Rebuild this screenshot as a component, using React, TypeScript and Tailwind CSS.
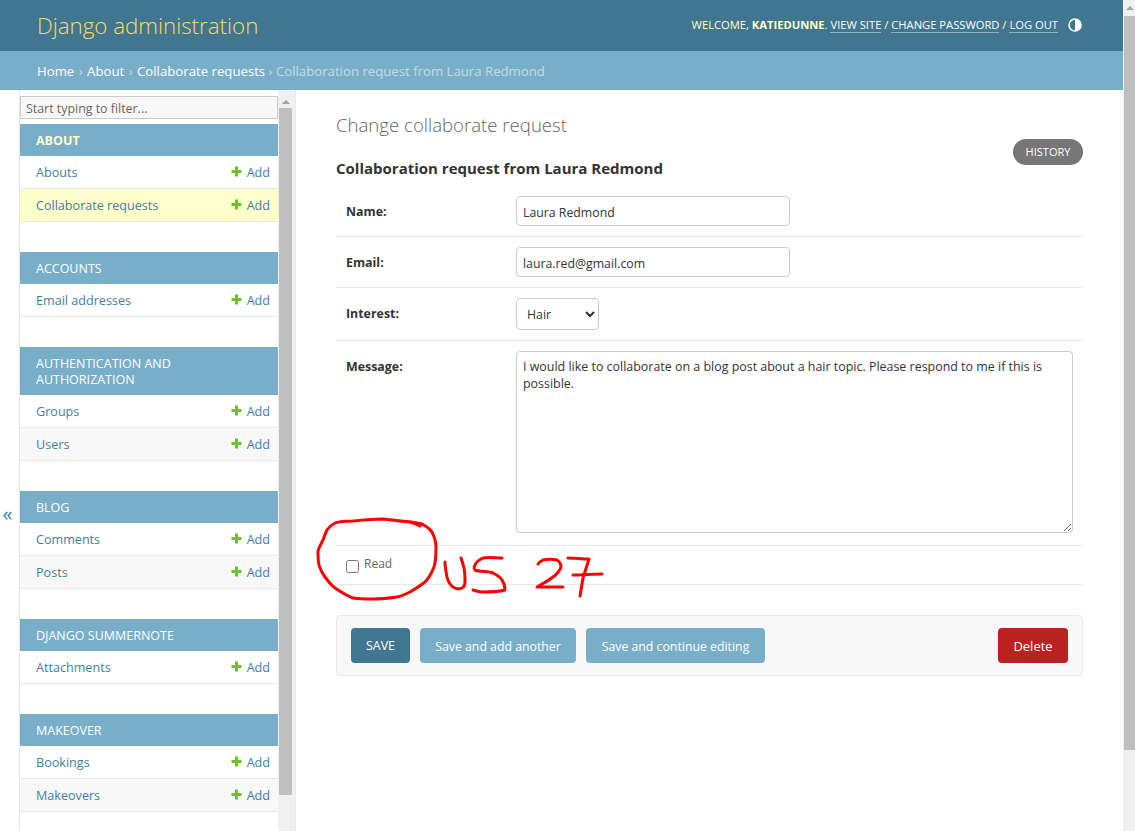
import React from "react";

const groups = [
  { title: "About", bold: true, models: ["Abouts", "Collaborate requests"] },
  { title: "Accounts", models: ["Email addresses"] },
  { title: "Authentication and Authorization", models: ["Groups", "Users"] },
  { title: "Blog", models: ["Comments", "Posts"] },
  { title: "Django Summernote", models: ["Attachments"] },
  { title: "Makeover", models: ["Bookings", "Makeovers"] },
];

function Plus() {
  return (
    <svg width="11" height="11" viewBox="0 0 11 11" className="mb-[3px] shrink-0">
      <path d="M4 0.5h3v3.5h3.5v3h-3.5v3.5h-3v-3.5h-3.5v-3h3.5z" fill="#70bf2b" />
    </svg>
  );
}

function Row({ label, children, className = "" }: { label: string; children: React.ReactNode; className?: string }) {
  return (
    <div className={`flex border-b border-[#e8e8e8] px-[10px] pt-[10px] ${className}`}>
      <label className="w-[170px] shrink-0 pt-[8px] text-[12.4px] leading-[16px] font-bold text-[#333]">{label}</label>
      {children}
    </div>
  );
}

export default function App() {
  return (
    <div className="relative flex h-[831px] w-full overflow-hidden bg-white font-['Open_Sans',sans-serif] text-[#333]">
      <div className="flex h-full w-[1123px] shrink-0 flex-col">
        <header className="flex h-[51px] shrink-0 items-center justify-between bg-[#417690] pl-[37px] pr-[41px]">
          <div className="pt-[1px] text-[22.3px] leading-[30px] font-light text-[#f5dd5d]">Django administration</div>
          <div className="flex items-center text-[11.2px] text-[#ffc]">
            <span>WELCOME, <b>KATIEDUNNE</b>.&nbsp;</span>
            <a className="border-b border-[#8fb1c2] leading-[14px] text-[#fff]">VIEW SITE</a>
            <span>&nbsp;/&nbsp;</span>
            <a className="border-b border-[#8fb1c2] leading-[14px] text-[#fff]">CHANGE PASSWORD</a>
            <span>&nbsp;/&nbsp;</span>
            <a className="border-b border-[#8fb1c2] leading-[14px] text-[#fff]">LOG OUT</a>
            <svg width="14" height="14" viewBox="0 0 14 14" className="ml-[10px]">
              <circle cx="7" cy="7" r="6" fill="none" stroke="#fff" strokeWidth="1.6" />
              <path d="M7 1a6 6 0 0 1 0 12z" fill="#fff" />
            </svg>
          </div>
        </header>
        <div className="flex h-[39px] shrink-0 items-center bg-[#79aec8] pl-[37px] pt-[2px] text-[13.2px] text-[#c4dce8]">
          <span className="text-white">Home</span>
          <span className="px-[1px]">&nbsp;›&nbsp;</span>
          <span className="text-white">About</span>
          <span className="px-[1px]">&nbsp;›&nbsp;</span>
          <span className="text-white">Collaborate requests</span>
          <span>&nbsp;›&nbsp;Collaboration request from Laura Redmond</span>
        </div>
        <div className="flex min-h-0 flex-1">
          <div className="flex w-[20px] shrink-0 items-center justify-center border-r border-[#e8e8e8] pt-[108px] text-[20px] leading-none text-[#447e9b]">
            <span className="pb-[2px] pr-[4px]">«</span>
          </div>
          <nav className="w-[258px] shrink-0 overflow-hidden pt-[6px]">
            <input
              placeholder="Start typing to filter..."
              className="mb-[5px] box-border block h-[23px] w-[258px] border border-[#ccc] bg-[#f8f8f8] px-[5px] pt-[2px] text-[12.4px] outline-none placeholder:text-[#666]"
            />
            {groups.map((g) => (
              <div key={g.title} className="mb-[30px]">
                <div className={`bg-[#79aec8] px-[16px] pb-[7px] pt-[9px] text-[12.5px] leading-[16px] uppercase ${g.bold ? "font-bold text-[#ffc]" : "text-white"}`}>
                  {g.title}
                </div>
                {g.models.map((m, i) => (
                  <div
                    key={m}
                    className={`flex h-[33px] items-center justify-between border-b border-[#e8e8e8] pl-[16px] pr-[8px] pt-[2px] text-[12.6px] text-[#447e9b] ${
                      m === "Collaborate requests" ? "bg-[#ffc]" : i % 2 ? "bg-[#f8f8f8]" : "bg-white"
                    }`}
                  >
                    <span className="font-medium">{m}</span>
                    <span className="flex items-center gap-[5px]">
                      <Plus />
                      Add
                    </span>
                  </div>
                ))}
              </div>
            ))}
          </nav>
          <div className="flex w-[18px] shrink-0 flex-col items-center border-r border-[#e8e8e8] bg-[#f0f0f0] pr-[2px] pt-[6px]">
            <div className="flex h-[12px] items-center justify-center">
              <div className="h-0 w-0 border-x-[4px] border-b-[4px] border-x-transparent border-b-[#a3a3a3]" />
            </div>
            <div className="h-[687px] w-[13px] bg-[#bfbfbf]" />
          </div>
          <main className="min-w-0 flex-1 pl-[40px] pr-[40px] pt-[23px]">
            <h1 className="text-[18.6px] leading-[24px] font-light text-[#666]">Change collaborate request</h1>
            <div className="mt-[2px] flex justify-end">
              <a className="flex h-[26px] w-[70px] items-center justify-center rounded-[13px] bg-[#767676] text-[11px] text-white">HISTORY</a>
            </div>
            <h2 className="-mt-[8px] text-[15px] leading-[22px] font-bold text-[#333]">Collaboration request from Laura Redmond</h2>
            <div className="mt-[7px]">
              <Row label="Name:" className="h-[51px]">
                <input defaultValue="Laura Redmond" className="box-border h-[30px] w-[274px] rounded-[4px] border border-[#ccc] bg-white px-[6px] pt-[2px] text-[12.3px] text-[#333] outline-none" />
              </Row>
              <Row label="Email:" className="h-[51px]">
                <input defaultValue="laura.red@gmail.com" className="box-border h-[30px] w-[274px] rounded-[4px] border border-[#ccc] bg-white px-[6px] pt-[2px] text-[12.3px] text-[#333] outline-none" />
              </Row>
              <Row label="Interest:" className="h-[53px]">
                <select defaultValue="Hair" className="box-border h-[32px] w-[83px] rounded-[4px] border border-[#ccc] bg-white px-[6px] text-[12.3px] text-[#333] outline-none">
                  <option>Hair</option>
                </select>
              </Row>
              <Row label="Message:" className="h-[205px]">
                <textarea
                  defaultValue="I would like to collaborate on a blog post about a hair topic. Please respond to me if this is possible."
                  className="box-border h-[182px] w-[557px] rounded-[4px] border border-[#ccc] bg-white px-[6px] py-[6px] text-[12.45px] leading-[17px] text-[#333] outline-none"
                />
              </Row>
              <div className="flex h-[39px] items-center border-b border-[#e8e8e8] pl-[10px]">
                <input type="checkbox" className="mt-[2px] h-[13px] w-[13px]" />
                <label className="mb-[2px] ml-[5px] text-[12px] leading-[16px] text-[#666]">Read</label>
              </div>
            </div>
            <div className="mt-[30px] flex h-[61px] items-center rounded-[4px] border border-[#e8e8e8] bg-[#f8f8f8] px-[14px]">
              <a className="flex h-[35px] w-[59px] items-center justify-center rounded-[4px] bg-[#417690] pt-[2px] text-[12.5px] text-white">SAVE</a>
              <a className="ml-[10px] flex h-[35px] w-[156px] items-center justify-center rounded-[4px] bg-[#79aec8] pt-[3px] text-[12.3px] text-white">Save and add another</a>
              <a className="ml-[10px] flex h-[35px] w-[179px] items-center justify-center rounded-[4px] bg-[#79aec8] pt-[3px] text-[12.3px] text-white">Save and continue editing</a>
              <a className="ml-auto flex h-[35px] w-[70px] items-center justify-center rounded-[4px] bg-[#ba2121] pt-[2px] text-[13px] text-white">Delete</a>
            </div>
          </main>
        </div>
      </div>
      <div className="flex h-full w-[12px] shrink-0 flex-col bg-[#f0f0f0] pl-[1px]">
        <div className="flex h-[16px] items-center justify-center">
          <div className="h-0 w-0 border-x-[4px] border-b-[4px] border-x-transparent border-b-[#a3a3a3]" />
        </div>
        <div className="h-[734px] bg-[#bfbfbf]" />
      </div>
      <svg className="pointer-events-none absolute left-0 top-0" width="1135" height="831" fill="none" stroke="#f00" strokeWidth="3" strokeLinecap="round" strokeLinejoin="round">
        <path d="M420 526C417 524 414 523 410 522L383 519C373 519 363 520 353 521C345 521 338 522 335 523C331 525 329 527 327 530C325 534 324 538 322 542C320 546 318 549 318 552C318 557 318 561 319 565C320 569 322 573 325 577C328 581 331 585 335 588C341 592 347 596 353 598C360 599 366 599 373 599C381 599 390 598 397 597C402 596 406 594 410 592C415 589 420 586 425 582C429 578 432 572 434 567C436 561 436 554 436 547C436 541 434 536 432 532C429 528 426 526 422 524C414 522 406 521 398 521" />
        <path d="M445 562C445 567 446 572 447 577C448 581 450 585 453 587C456 589 460 589 462 588C464 587 465 585 465 582C465 577 465 573 464 568C463 564 462 561 461 558" />
        <path d="M502 558C496 558 489 557 483 558C479 560 476 562 475 565C474 567 474 569 475 570C480 572 488 571 493 573C497 575 500 577 502 580C504 583 505 587 505 590C498 592 490 592 483 592C479 592 476 591 473 590" />
        <path d="M538 564C539 562 541 561 543 560C548 559 553 559 557 560C560 562 561 564 561 567C560 570 557 574 553 577C548 581 542 584 537 587C546 587 555 587 563 587" />
        <path d="M568 558C575 558 582 559 589 559C587 565 585 572 583 578C582 584 581 590 580 596" />
        <path d="M573 575C583 575 592 574 602 574" />
      </svg>
    </div>
  );
}
